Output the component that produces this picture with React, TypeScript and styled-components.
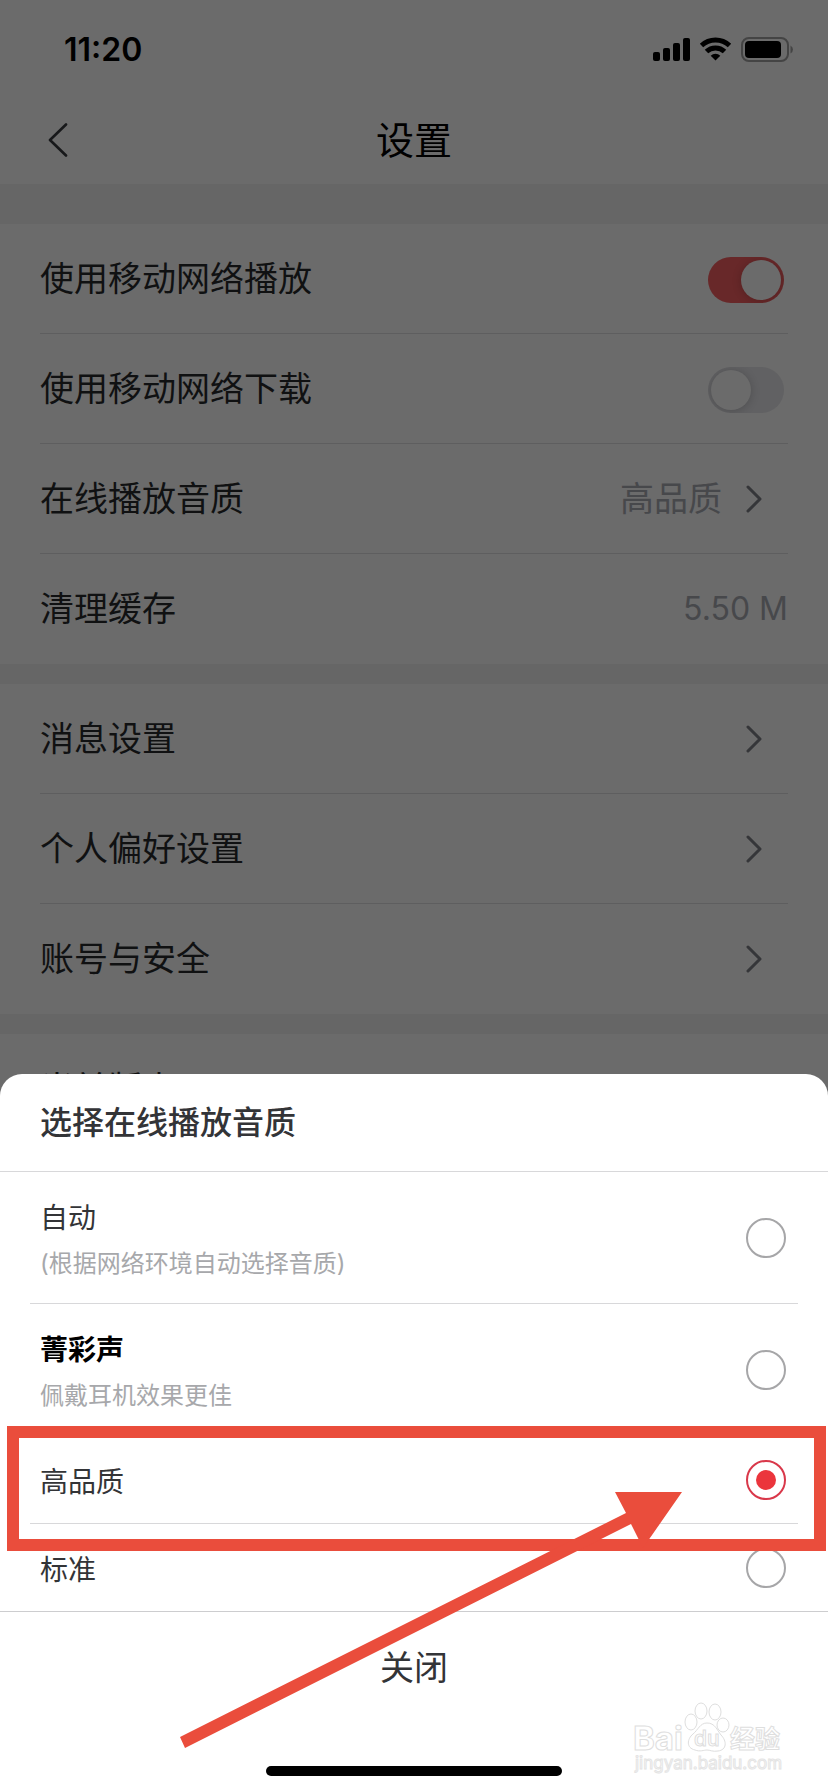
import React, { useState } from "react";
import styled, { createGlobalStyle, css } from "styled-components";

const GlobalStyle = createGlobalStyle`
  *, *::before, *::after { box-sizing: border-box; }
  body {
    margin: 0;
    background: #fff;
    font-family: Inter, "Noto Sans CJK SC", sans-serif;
    color: #17181a;
  }
  button { font: inherit; color: inherit; background: none; border: 0; padding: 0; cursor: pointer; }
`;

const Screen = styled.div`
  position: relative;
  min-height: 100vh;
  display: flex;
  flex-direction: column;
  background: #6b6b6b;
  overflow: hidden;
`;

const Page = styled.main`
  height: 1074px;
  margin-bottom: -30px;
  flex: 1 0 auto;
`;

const StatusBar = styled.div`
  height: 96px;
  padding: 4px 34px 0 64px;
  display: flex;
  align-items: center;
  justify-content: space-between;
  color: #000;
`;

const Clock = styled.time`
  font-size: 32px;
  line-height: 40px;
  font-weight: 600;
`;

const StatusIcons = styled.svg`
  width: 142px;
  height: 28px;
`;

const NavBar = styled.header`
  height: 88px;
  padding: 0 32px;
  display: grid;
  grid-template-columns: 52px 1fr 52px;
  align-items: center;
`;

const BackButton = styled.button`
  height: 52px;
  display: flex;
  align-items: center;
  justify-content: center;
`;

const NavTitle = styled.h1`
  margin: 0;
  font-size: 38px;
  line-height: 48px;
  font-weight: 400;
  text-align: center;
  color: #000;
`;

const Band = styled.div<{ $tall?: boolean }>`
  height: ${(p) => (p.$tall ? 40 : 20)}px;
  background: #666;
`;

const Group = styled.section`
  padding: 0 40px;
`;

const rowStyle = css`
  width: 100%;
  height: 110px;
  display: flex;
  align-items: center;
  justify-content: space-between;
  border-bottom: 1px solid #5e5e5f;
  font-size: 34px;
  line-height: 44px;
  text-align: left;
  color: #101112;
`;

const Row = styled.div`
  ${rowStyle}
  ${Group} > &:last-child { border-bottom-color: transparent; }
`;

const RowLabel = styled.label``;

const LinkRow = styled.button`
  && {
    ${rowStyle}
    padding-right: 26px;
  }
  ${Group} > &&:last-child { border-bottom-color: transparent; }
`;

const Value = styled.span<{ $numeric?: boolean }>`
  font-size: ${(p) => (p.$numeric ? 32 : 34)}px;
  color: #47484b;
`;

const Trailing = styled.span`
  display: flex;
  align-items: center;
  gap: 24px;
`;

const Switch = styled.input`
  appearance: none;
  margin: 2px 4px 0 0;
  width: 76px;
  height: 46px;
  border-radius: 23px;
  background: #616163;
  display: flex;
  align-items: center;
  padding: 0 3px;
  overflow: hidden;
  cursor: pointer;
  &::before {
    content: "";
    width: 40px;
    height: 40px;
    border-radius: 50%;
    background: #6b6b6b;
    box-shadow: 0 1px 10px rgba(0, 0, 0, 0.2);
  }
  &:checked {
    background: #682829;
    justify-content: flex-end;
  }
`;

const Sheet = styled.section`
  position: relative;
  flex: none;
  background: #fff;
  border-radius: 22px 22px 0 0;
  color: #333437;
`;

const SheetTitle = styled.h2`
  margin: 0;
  height: 98px;
  padding: 0 40px;
  display: flex;
  align-items: center;
  border-bottom: 1px solid #d8d8da;
  font-size: 32px;
  line-height: 40px;
  font-weight: 500;
`;

const Options = styled.div`
  padding: 0 30px;
  border-bottom: 1px solid #cdcdcf;
`;

const Option = styled.label<{ $tall?: boolean }>`
  height: ${(p) => (p.$tall ? 132 : 88)}px;
  padding: 0 12px 0 10px;
  display: flex;
  align-items: center;
  justify-content: space-between;
  border-bottom: 1px solid #d8d8da;
  cursor: pointer;
  &:last-child {
    height: 87px;
    border-bottom: 0;
  }
`;

const OptionText = styled.span`
  padding-top: 4px;
  display: flex;
  flex-direction: column;
  gap: 8px;
`;

const OptionName = styled.span<{ $strong?: boolean }>`
  font-size: 28px;
  line-height: 40px;
  font-weight: ${(p) => (p.$strong ? 700 : 400)};
  color: ${(p) => (p.$strong ? "#000" : "inherit")};
`;

const OptionHint = styled.span`
  font-size: 24px;
  line-height: 36px;
  color: #a7a8ab;
`;

const Radio = styled.input`
  appearance: none;
  flex: none;
  margin: 0;
  width: 40px;
  height: 40px;
  border: 2px solid #a6a6a8;
  border-radius: 50%;
  display: grid;
  place-items: center;
  &:checked { border-color: #d9384a; }
  &:checked::before {
    content: "";
    width: 20px;
    height: 20px;
    border-radius: 50%;
    background: #eb353c;
  }
`;

const CloseButton = styled.button`
  width: 100%;
  height: 112px;
  display: block;
  && { font-size: 34px; line-height: 44px; }
`;

const HomeArea = styled.div`
  height: 68px;
  padding-bottom: 16px;
  display: flex;
  align-items: flex-end;
  justify-content: center;
`;

const HomeBar = styled.div`
  width: 296px;
  height: 10px;
  border-radius: 5px;
  background: #000;
`;

const Highlight = styled.div`
  position: absolute;
  top: 352px;
  left: 7px;
  right: 2px;
  height: 125px;
  border: 12px solid #ea4d3c;
  pointer-events: none;
`;

const Arrow = styled.svg`
  position: absolute;
  top: 413px;
  left: 50%;
  margin-left: -234px;
  width: 504px;
  height: 264px;
  pointer-events: none;
`;

const Watermark = styled.svg`
  position: absolute;
  right: 42px;
  bottom: 2px;
  width: 156px;
  height: 92px;
  pointer-events: none;
`;

const Chevron = () => (
  <svg width="16" height="28" viewBox="0 0 16 28" fill="none" stroke="#353639" strokeWidth="3" strokeLinecap="round" strokeLinejoin="round" aria-hidden="true">
    <path d="M2 2 14 14 2 26" />
  </svg>
);

const LinkItem = ({ label, value }: { label: string; value?: string }) => (
  <LinkRow type="button">
    <span>{label}</span>
    <Trailing>
      {value && <Value>{value}</Value>}
      <Chevron />
    </Trailing>
  </LinkRow>
);

const options = [
  { id: "auto", name: "自动", hint: "(根据网络环境自动选择音质)" },
  { id: "jingcai", name: "菁彩声", hint: "佩戴耳机效果更佳", strong: true },
  { id: "high", name: "高品质" },
  { id: "standard", name: "标准" },
];

export default function App() {
  const [quality, setQuality] = useState("high");
  return (
    <>
      <GlobalStyle />
      <Screen>
        <Page>
          <StatusBar>
            <Clock>11:20</Clock>
            <StatusIcons viewBox="0 0 142 28" aria-hidden="true">
              <rect x="1" y="16" width="7" height="9" rx="2" />
              <rect x="11" y="12" width="7" height="13" rx="2" />
              <rect x="21" y="7" width="7" height="18" rx="2" />
              <rect x="31" y="2" width="7" height="23" rx="2" />
              <g fill="none" stroke="#000" strokeWidth="5">
                <path d="M49.500 9.500a20.500 20.500 0 0 1 28 0" />
                <path d="M54.500 15.500a13 13 0 0 1 18 0" />
              </g>
              <path d="M63.500 24.500l-4.800-4.800a7.200 7.200 0 0 1 9.600 0z" />
              <rect x="90" y="2" width="46" height="23" rx="7" fill="none" stroke="#444" strokeWidth="2" />
              <rect x="93" y="5" width="36" height="17" rx="4" />
              <path d="M138.500 9.500a4.500 4.500 0 0 1 0 8z" fill="#444" />
            </StatusIcons>
          </StatusBar>
          <NavBar>
            <BackButton type="button" aria-label="返回">
              <svg width="20" height="34" viewBox="0 0 20 34" fill="none" stroke="#17181a" strokeWidth="2.600" strokeLinecap="round" strokeLinejoin="round" aria-hidden="true">
                <path d="M18 1.500 2 17 18 32.500" />
              </svg>
            </BackButton>
            <NavTitle>设置</NavTitle>
          </NavBar>
          <Band $tall />
          <Group>
            <Row>
              <RowLabel htmlFor="play">使用移动网络播放</RowLabel>
              <Switch id="play" type="checkbox" role="switch" defaultChecked />
            </Row>
            <Row>
              <RowLabel htmlFor="download">使用移动网络下载</RowLabel>
              <Switch id="download" type="checkbox" role="switch" />
            </Row>
            <LinkItem label="在线播放音质" value="高品质" />
            <Row>
              <span>清理缓存</span>
              <Value $numeric>5.50 M</Value>
            </Row>
          </Group>
          <Band />
          <Group>
            <LinkItem label="消息设置" />
            <LinkItem label="个人偏好设置" />
            <LinkItem label="账号与安全" />
          </Group>
          <Band />
          <Group>
            <Row>
              <span>当前版本</span>
            </Row>
          </Group>
        </Page>
        <Sheet role="dialog" aria-labelledby="sheet-title">
          <SheetTitle id="sheet-title">选择在线播放音质</SheetTitle>
          <Options role="radiogroup" aria-labelledby="sheet-title">
            {options.map((o) => (
              <Option key={o.id} $tall={!!o.hint}>
                <OptionText>
                  <OptionName $strong={o.strong}>{o.name}</OptionName>
                  {o.hint && <OptionHint>{o.hint}</OptionHint>}
                </OptionText>
                <Radio type="radio" name="quality" value={o.id} checked={quality === o.id} onChange={() => setQuality(o.id)} />
              </Option>
            ))}
          </Options>
          <CloseButton type="button">关闭</CloseButton>
          <HomeArea>
            <HomeBar />
          </HomeArea>
          <Watermark viewBox="0 0 156 92" aria-hidden="true" fill="#fff" stroke="#dedede" strokeWidth="1">
            <g fontFamily="Inter, 'Noto Sans CJK SC', sans-serif">
              <text x="3" y="52" fontSize="33" fontWeight="700">Bai</text>
              <ellipse cx="61" cy="24" rx="6" ry="8" />
              <ellipse cx="71" cy="13" rx="6" ry="8" />
              <ellipse cx="85" cy="14" rx="6" ry="8" />
              <ellipse cx="93" cy="27" rx="6" ry="7" />
              <path d="M77 25c8 0 10 7 14 12 6 6 6 15-3 16-5 1-8-1-11-1s-7 2-12 0c-9-2-8-11-2-16 5-4 7-11 14-11z" />
              <text x="64" y="48" fontSize="21" fontWeight="500">du</text>
              <text x="100" y="50" fontSize="25" fontWeight="700">经验</text>
              <text x="5" y="71" fontSize="17" stroke="#e4e4e4">jingyan.baidu.com</text>
            </g>
          </Watermark>
          <Highlight />
          <Arrow viewBox="0 0 504 264" fill="#ea4d3c" aria-hidden="true">
            <path d="M0 250 446 26 435 5H502L463 61 451 37 5 261z" />
          </Arrow>
        </Sheet>
      </Screen>
    </>
  );
}
